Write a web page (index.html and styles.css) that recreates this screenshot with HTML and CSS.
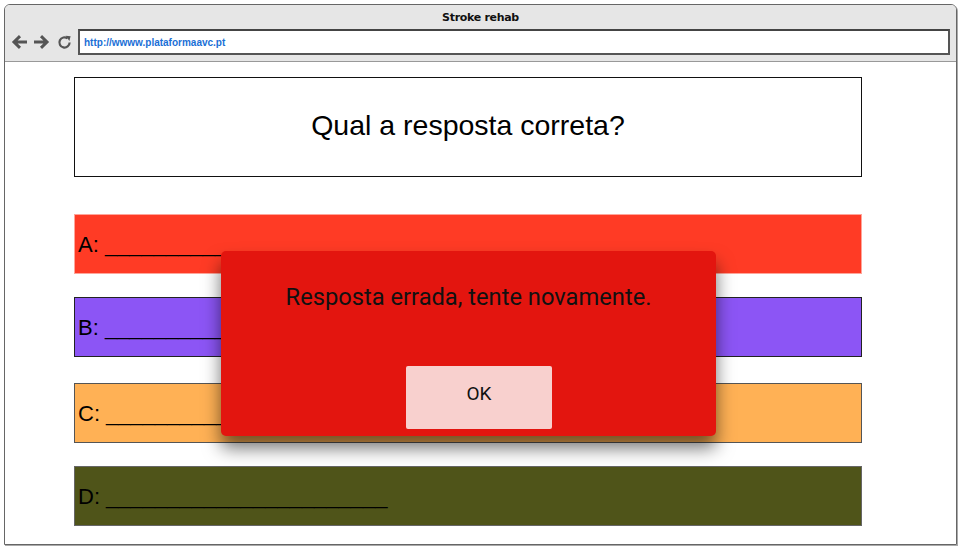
FILE: index.html
```html
<!DOCTYPE html>
<html lang="pt">
<head>
<meta charset="utf-8">
<title>Stroke rehab</title>
<link rel="stylesheet" href="styles.css">
</head>
<body>
<div class="window">
  <div class="chrome">
    <div class="title">Stroke rehab</div>
    <div class="navrow">
      <svg class="nav" width="17" height="16" viewBox="0 0 17 16"><path d="M16 8H3.5M9 2.2L3 8l6 5.8" fill="none" stroke="#555" stroke-width="3"/></svg>
      <svg class="nav" width="17" height="16" viewBox="0 0 17 16"><path d="M1 8h12.5M8 2.2L14 8l-6 5.8" fill="none" stroke="#555" stroke-width="3"/></svg>
      <svg class="nav reload" width="15" height="15" viewBox="0 0 15 15"><path d="M12.6 7.5A5.1 5.1 0 1 1 10.6 3.4" fill="none" stroke="#555" stroke-width="2.2"/><path d="M8.6 0.8l5 0.4-1.2 4.8z" fill="#555"/></svg>
      <div class="url">http://wwww.plataformaavc.pt</div>
    </div>
  </div>
  <div class="content">
    <div class="question">Qual a resposta correta?</div>
    <div class="options">
      <div class="opt opt-a">A: _______________________</div>
      <div class="opt opt-b">B: _______________________</div>
      <div class="opt opt-c">C: _______________________</div>
      <div class="opt opt-d">D: _______________________</div>
    </div>
    <div class="dialog">
      <div class="msg">Resposta errada, tente novamente.</div>
      <div class="ok">OK</div>
    </div>
  </div>
</div>
</body>
</html>
```
FILE: styles.css
```css
html, body { margin: 0; padding: 0; background: #fff; }
body { width: 962px; height: 549px; overflow: hidden; }
.window {
  margin: 4px 0 0 4px;
  width: 951px;
  height: 539px;
  border: 1px solid #666;
  border-radius: 6px 6px 0 0;
  display: flex;
  flex-direction: column;
  overflow: hidden;
  box-shadow: 1px 1px 0 #aaa;
}
.chrome {
  background: #e6e6e6;
  height: 56px;
  border-bottom: 1px solid #999;
  display: flex;
  flex-direction: column;
}
.title {
  font-family: "DejaVu Sans", sans-serif;
  font-weight: bold;
  font-size: 11px;
  text-align: center;
  color: #111;
  height: 13px;
  line-height: 13px;
  margin-top: 6px;
  letter-spacing: -0.3px;
}
.navrow {
  display: flex;
  align-items: center;
  margin-top: 5px;
  padding-left: 6px;
}
.nav { margin-right: 5px; }
.nav.reload { margin-left: 2px; margin-right: 6px; }
.url {
  flex: 1;
  margin-right: 6px;
  height: 22px;
  border: 2px solid #555;
  border-top-color: #444;
  background: #fff;
  font-family: "Liberation Sans", Arial, sans-serif;
  font-size: 10px;
  font-weight: bold;
  color: #1a6fd6;
  line-height: 23px;
  padding-left: 4px;
}
.content {
  position: relative;
  flex: 1;
  background: #fff;
  padding: 15px 0 0 69px;
}
.question {
  width: 786px;
  height: 98px;
  border: 1px solid #111;
  font-family: "Liberation Sans", Arial, sans-serif;
  font-size: 28.5px;
  line-height: 94px;
  text-align: center;
  color: #000;
}
.options {
  margin-top: 37px;
  display: flex;
  flex-direction: column;
  gap: 23px;
}
.opt {
  width: 783px;
  height: 58px;
  padding-left: 3px;
  border: 1px solid #222;
  font-family: "Liberation Sans", Arial, sans-serif;
  font-size: 22px;
  line-height: 60px;
  color: #000;
  white-space: pre;
}
.opt-a { background: #ff3b25; border-color: #ffa59a; }
.opt-b { background: #8c55f5; border-color: #222; }
.opt-c { background: #ffb155; border-color: #555; margin-top: 3px; }
.opt-d { background: #4f5419; border-color: #666; }
.dialog {
  position: absolute;
  left: 216px;
  top: 189px;
  width: 495px;
  height: 185px;
  background: #e3150f;
  border-radius: 5px;
  box-shadow: 0 12px 18px rgba(0,0,0,0.55);
  display: flex;
  flex-direction: column;
}
.msg {
  font-family: Roboto, "Noto Sans", sans-serif;
  font-size: 23.7px;
  color: #111;
  text-align: center;
  margin-top: 32px;
  line-height: 28px;
}
.ok {
  margin-top: 55px;
  margin-left: 185px;
  width: 146px;
  height: 63px;
  background: #f8d0ce;
  border-radius: 2px;
  font-family: Roboto, "Noto Sans", sans-serif;
  font-size: 19px;
  color: #111;
  text-align: center;
  line-height: 56px;
}
```
